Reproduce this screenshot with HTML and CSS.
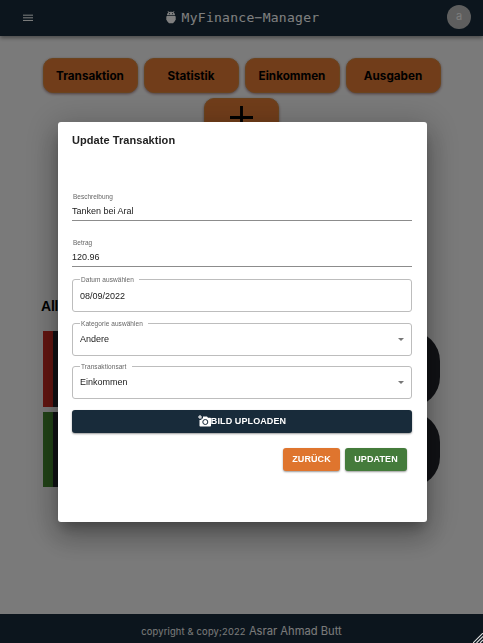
FILE: index.html
```html
<!DOCTYPE html>
<html lang="de">
<head>
<meta charset="utf-8">
<title>MyFinance-Manager</title>
<link rel="stylesheet" href="styles.css">
</head>
<body>
<div class="page">
  <header class="topbar">
    <svg class="menu" viewBox="0 0 11 8"><path d="M0 .9h11M0 3.800h11M0 6.700h11" stroke="currentColor" stroke-width="1.100"/></svg>
    <div class="brand">
      <svg class="robot" viewBox="0 0 10 13"><path d="M1 4.200C1 2.900 1.600 2 2.400 1.500L1.500.3 2 0l1 1.100a5 5 0 0 1 4 0L8 0l.5.3-.9 1.200C8.400 2 9 2.900 9 4.200zM1 5h8v5L7 12.300H3L1 10zM0 5.200h.7v4H0zM9.300 5.200h.7v4h-.7z" fill="currentColor"/><path d="M3 2.700h1M6 2.700h1" stroke="#1a2d3d" stroke-width=".9"/></svg>
      <span>MyFinance−Manager</span>
    </div>
    <div class="avatar">a</div>
  </header>
  <main>
    <nav class="tabs">
      <div class="tab">Transaktion</div>
      <div class="tab">Statistik</div>
      <div class="tab">Einkommen</div>
      <div class="tab">Ausgaben</div>
      <div class="tab add"><svg viewBox="0 0 24 24"><path d="M12 0v24M0 12h24" stroke="#000" stroke-width="3"/></svg></div>
    </nav>
    <h2>All</h2>
    <div class="entry expense"></div>
    <div class="entry income"></div>
  </main>
  <footer><small>copyright &amp; copy;2022</small> <span>Asrar Ahmad Butt</span></footer>
</div>
<div class="backdrop">
  <form class="dialog">
    <h1>Update Transaktion</h1>
    <div class="line-field"><label>Beschreibung</label><div class="value">Tanken bei Aral</div></div>
    <div class="line-field"><label>Betrag</label><div class="value">120.96</div></div>
    <fieldset class="date"><legend>Datum auswählen</legend><div class="value">08/09/2022</div></fieldset>
    <fieldset class="category"><legend>Kategorie auswählen</legend><div class="value">Andere</div><i class="caret"></i></fieldset>
    <fieldset class="kind"><legend class="wide">Transaktionsart</legend><div class="value">Einkommen</div><i class="caret"></i></fieldset>
    <div class="button upload">
      <svg viewBox="0 0 13 12"><path d="M1.500 0h1v1.500h1.500v1H2.500v1.500h-1V2.500H0v-1h1.500zM5 1.500h4l1 1.200h2.200q.8 0 .8.800v7.200q0 .8-.8.800H2.300q-.8 0-.8-.8V5H3.400V3.500H5z" fill="#fff"/><circle cx="7.300" cy="7" r="2.500" fill="none" stroke="#182b3a" stroke-width="1"/></svg><span>BILD UPLOADEN</span>
    </div>
    <div class="actions"><div class="button back">ZURÜCK</div><div class="button save">UPDATEN</div></div>
  </form>
</div>
<svg class="grip" viewBox="0 0 10 10"><path d="M0 10L10 0M3.500 10L10 3.500M7 10L10 7" stroke="#ddd" stroke-width="1.100"/></svg>
</body>
</html>
```
FILE: styles.css
```css
* { box-sizing: border-box; }
body { margin: 0; overflow: hidden; font-family: "Liberation Sans", Arial, sans-serif; }
.page { height: 643px; display: flex; flex-direction: column; background: #f5f5f5; font-family: Inter, sans-serif; }
.topbar { height: 36px; flex: none; display: grid; grid-template-columns: 36px 1fr 36px; align-items: center; padding: 0 12px 2px 23px; background: #182b3a; color: #fff; box-shadow: 0 2px 4px rgba(0,0,0,.4); }
.menu { width: 10px; height: 8px; margin-top: 1px; }
.brand { display: flex; align-items: center; justify-content: center; gap: 6px; padding: 1px 9px 0 0; font: 13px/16px "DejaVu Sans Mono", monospace; letter-spacing: .28px; }
.robot { width: 10px; height: 13px; }
.avatar { width: 24px; height: 24px; margin-left: 12px; border-radius: 50%; background: #bdbdbd; color: #fafafa; text-align: center; font-size: 11px; line-height: 23px; }
main { flex: 1; min-height: 0; padding: 22px 41px 0; }
.tabs { display: flex; flex-wrap: wrap; justify-content: center; gap: 5px 6px; height: 116px; align-content: flex-start; }
.tab { width: 95px; height: 35px; border: 1px solid #d5893c; border-radius: 10px; background: #e37b35; color: #000; font-size: 11.700px; font-weight: 700; line-height: 34px; text-align: center; box-shadow: 0 1px 3px rgba(120,55,60,.65); }
.add { width: 75px; height: 40px; padding-top: 7px; line-height: 0; }
.add svg { width: 23px; height: 23px; }
h2 { width: 17px; height: 30px; margin: 117px 0 10px; overflow: hidden; white-space: nowrap; font: bold 14px/31px "Liberation Sans", sans-serif; letter-spacing: -.2px; }
.entry { width: 397px; height: 76px; margin: 0 0 5px 2px; border-left: 10px solid #c72b21; border-radius: 0 30px 30px 0; background: #22242b; }
.income { border-color: #43872e; height: 75px; }
footer { height: 29px; flex: none; padding-top: 9px; background: #182b3a; color: #f5f5f5; text-align: center; font-size: 11.200px; line-height: 17px; }
footer small { font-size: 9.300px; letter-spacing: .2px; }
.backdrop { position: fixed; inset: 0; display: grid; justify-content: center; align-content: center; padding-left: 2px; background: rgba(0,0,0,.5); }
.dialog { width: 369px; height: 400px; padding: 10px 15px 0 14px; border-radius: 3px; background: #fff; color: #222; box-shadow: 0 8px 12px -4px rgba(0,0,0,.25), 0 16px 26px 2px rgba(0,0,0,.18), 0 5px 32px 6px rgba(0,0,0,.18); }
h1 { margin: 0 0 45px; font-size: 11px; line-height: 16px; letter-spacing: .06px; }
.line-field { height: 28px; margin-bottom: 18px; border-bottom: 1px solid #8c8c8c; }
label, legend { color: #666; font-size: 6.500px; line-height: 8px; }
label { display: block; padding-left: 1px; }
.value { font-size: 9px; line-height: 12px; }
.line-field .value { margin-top: 4px; }
fieldset { display: flex; align-items: center; min-width: 0; margin: 0; border: 1px solid #bdbdbd; border-radius: 3px; padding: 0 7px 4px; }
legend { padding: 0 5px 0 1px; letter-spacing: .06px; }
.wide { padding-right: 6px; }
.line-field + fieldset { margin-top: -9px; }
.date { height: 36px; padding-bottom: 2px; }
.category { height: 36px; margin-top: 8px; }
.kind { height: 36px; margin-top: 7px; }
.caret { margin-left: auto; border: 3px solid transparent; border-top-color: #777; border-bottom: 0; }
.button { display: flex; align-items: center; justify-content: center; height: 23px; border-radius: 3px; color: #fff; font-size: 9px; font-weight: 700; box-shadow: 0 1px 2px rgba(0,0,0,.4); letter-spacing: .1px; padding-bottom: 1px; }
.upload { margin-top: 11px; background: #182b3a; }
.upload svg { width: 13px; height: 12px; flex: none; }
.actions { display: flex; justify-content: flex-end; gap: 5px; padding-right: 5px; margin-top: 15px; }
.back { width: 57px; background: #df752e; }
.save { width: 62px; background: #447b3b; }
.grip { position: fixed; right: 0; bottom: 0; width: 10px; height: 10px; }
```
